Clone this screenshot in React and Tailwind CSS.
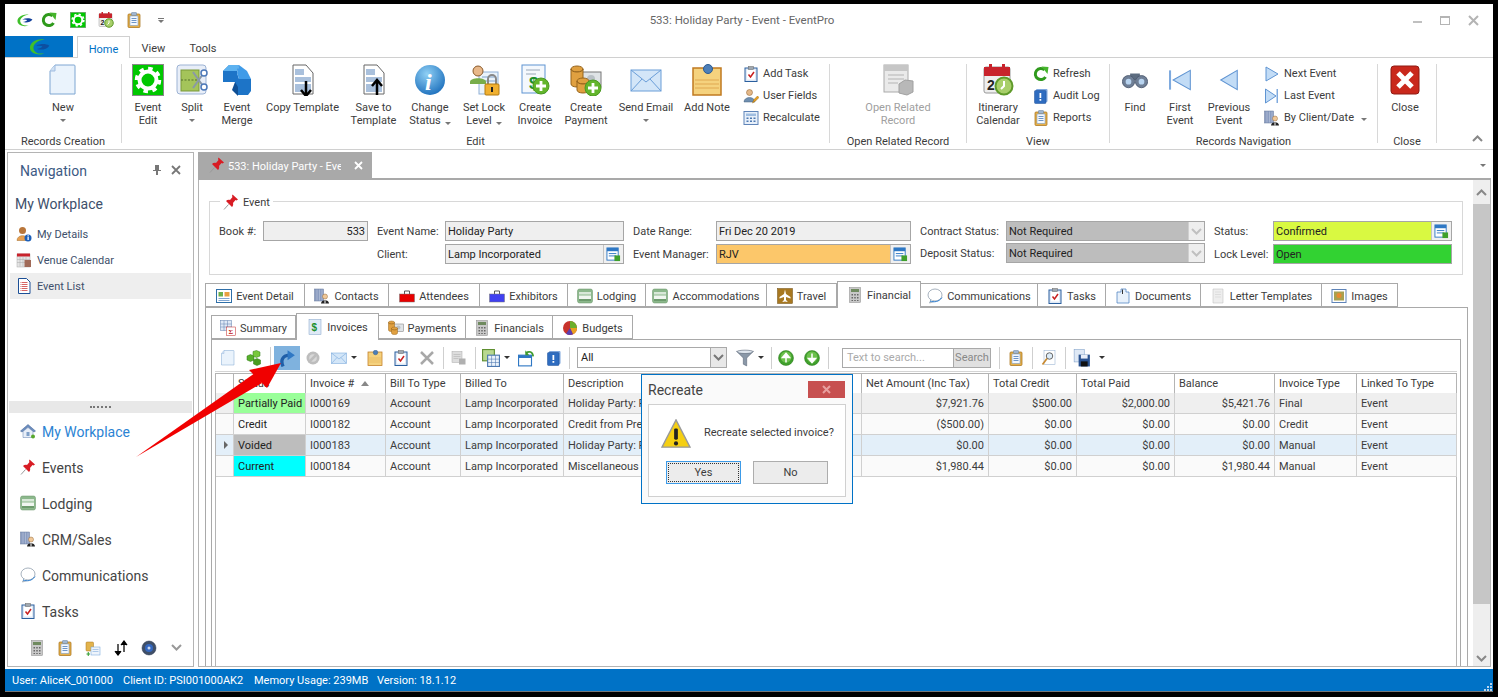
import React from "react";

const Ic = ({ s = 16, v = 16, children }) => (
  <svg width={s} height={s} viewBox={`0 0 ${v} ${v}`} className="shrink-0">
    {children}
  </svg>
);

// small icon set, all drawn on a 32 box
const Logo = ({ s = 18, dark }) => (
  <Ic s={s} v={32}>
    <path d="M24 5C11 3 1 11 3 19c2 7 13 10 21 6-8 2-15-1-16-7-1-6 6-12 16-13z" fill="#3fbf2a" />
    <path d="M12 14c6-3 14-3 19 0-3 5-11 7-18 5 4-1 7-2 8-4-3-1-6-1-9-1z" fill={dark ? "#0d4fa0" : "#123f9a"} />
  </Ic>
);
const Refresh = ({ s = 16 }) => (
  <Ic s={s} v={32}>
    <path d="M25 22a11 11 0 1 1-2-14" fill="none" stroke="#2f9a1c" strokeWidth="6" />
    <path d="M17 1l14 1-2 14z" fill="#46b52c" />
  </Ic>
);
const Gear = ({ s = 16 }) => (
  <Ic s={s} v={32}>
    <rect x="0.5" y="0.5" width="31" height="31" fill="#00c800" stroke="#888" />
    <circle cx="16" cy="16" r="11.5" fill="none" stroke="#fff" strokeWidth="3.5" strokeDasharray="4.5 4.5" />
    <circle cx="16" cy="16" r="8.5" fill="none" stroke="#fff" strokeWidth="4" />
  </Ic>
);
const CalClock = ({ s = 16 }) => (
  <Ic s={s} v={32}>
    <rect x="2" y="3" width="26" height="26" rx="2" fill="#eee" stroke="#999" />
    <rect x="2" y="3" width="26" height="9" fill="#c8232c" />
    <rect x="7" y="0" width="3" height="6" fill="#c8232c" />
    <rect x="20" y="0" width="3" height="6" fill="#c8232c" />
    <text x="5" y="26" fontSize="14" fontWeight="700" fill="#222" fontFamily="Liberation Sans">2</text>
    <circle cx="22" cy="22" r="8.5" fill="#a8cf6a" stroke="#5f9a2a" strokeWidth="2" />
    <path d="M22 17v5l-3 3" stroke="#fff" strokeWidth="2" fill="none" />
  </Ic>
);
const Clip = ({ s = 16 }) => (
  <Ic s={s} v={32}>
    <rect x="4" y="4" width="24" height="27" rx="2" fill="#e6b04a" stroke="#a9741c" strokeWidth="1.5" />
    <rect x="8" y="8" width="16" height="19" fill="#f4f8fd" stroke="#6b8fc0" />
    <rect x="11" y="1" width="10" height="6" rx="1" fill="#9fb5cf" stroke="#66809e" />
    <path d="M11 13h10M11 17h10M11 21h10" stroke="#3f74b5" strokeWidth="1.5" />
  </Ic>
);
const NewDoc = ({ s = 32 }) => (
  <Ic s={s} v={32}>
    <path d="M8 1h19a1 1 0 0 1 1 1v28H3V7z" fill="#eaf3fc" stroke="#7fa6d2" />
    <path d="M8 1v6H3" fill="#cfe0f3" stroke="#9fbce0" />
  </Ic>
);
const Split = () => (
  <Ic s={32} v={32}>
    <rect x="1" y="1" width="29" height="29" rx="3" fill="#e8eef8" stroke="#9db3d4" />
    <rect x="5" y="6" width="18" height="21" fill="#a4c45a" stroke="#7a9a38" />
    <path d="M5 16h18" stroke="#55702a" strokeDasharray="2 1.5" />
    <path d="M17 8l10 14M17 24l10-14" stroke="#8a98a8" strokeWidth="2" />
    <circle cx="28" cy="9" r="3" fill="#fff" stroke="#4c78b8" strokeWidth="1.5" />
    <circle cx="28" cy="23" r="3" fill="#fff" stroke="#4c78b8" strokeWidth="1.5" />
  </Ic>
);
const Merge = () => (
  <Ic s={32} v={32}>
    <path d="M2 7l6-6h10l-2 8 2 6h12v12l-3 4H17l-3-4v-9H2z" fill="#1d74c7" />
    <path d="M18 1l-2 8 2 6h12l-4-8-8-6z" fill="#3f9be8" />
    <path d="M2 7l6-6h10l-2 6H2z" fill="#5db2f0" />
    <path d="M14 18l-3 8 6 6v-9z" fill="#0e4f95" />
  </Ic>
);
const Template = ({ up }) => (
  <Ic s={32} v={32}>
    <path d="M6 1h13l7 8v21H6z" fill="#fff" stroke="#666" />
    <path d="M8 5h9v6H8zM8 13h16v5H8zM8 20h16v8H8z" fill="#a9c0dc" />
    <path d={up ? "M19 31V17M14 22l5-6 5 6" : "M19 17v14M14 26l5 6 5-6"} stroke="#000" strokeWidth="2.5" fill="none" />
  </Ic>
);
const Info = () => (
  <Ic s={32} v={32}>
    <defs>
      <radialGradient id="ig" cx="0.4" cy="0.3" r="0.8">
        <stop offset="0" stopColor="#8fd0f5" />
        <stop offset="1" stopColor="#1468b8" />
      </radialGradient>
    </defs>
    <circle cx="16" cy="16" r="15" fill="url(#ig)" />
    <text x="11" y="26" fontSize="24" fontWeight="700" fontStyle="italic" fill="#fff" fontFamily="Liberation Serif">i</text>
  </Ic>
);
const LockUser = () => (
  <Ic s={32} v={32}>
    <rect x="11" y="8" width="19" height="22" fill="#eaf3fb" stroke="#8fb0d6" />
    <path d="M14 13h13M14 17h13" stroke="#7fa3cc" />
    <circle cx="10" cy="7" r="5" fill="#e8b88a" stroke="#8a5a2a" />
    <path d="M2 18c0-5 16-5 16 0v2H2z" fill="#78ad4a" />
    <path d="M20 20v-5a4 4 0 0 1 8 0v5" fill="none" stroke="#888" strokeWidth="2" />
    <rect x="17" y="20" width="14" height="11" rx="1" fill="#f0b030" stroke="#b37a10" />
    <rect x="23" y="23" width="2" height="5" fill="#222" />
  </Ic>
);
const PlusDot = ({ x = 22, y = 22 }) => (
  <g>
    <circle cx={x} cy={y} r="8" fill="#63b52c" stroke="#4a9a20" />
    <path d={`M${x - 5} ${y}h10M${x} ${y - 5}v10`} stroke="#fff" strokeWidth="2.8" />
  </g>
);
const InvoicePlus = () => (
  <Ic s={32} v={32}>
    <rect x="3" y="1" width="23" height="28" fill="#f4f8fd" stroke="#5f94d2" />
    <path d="M7 6h14M7 10h10" stroke="#9aa8b8" />
    <text x="10" y="25" fontSize="17" fontWeight="700" fill="#1c8f2c" fontFamily="Liberation Sans">$</text>
    <PlusDot />
  </Ic>
);
const Coins = ({ s = 32, plus }) => (
  <Ic s={s} v={32}>
    <rect x="11" y="8" width="20" height="15" fill="#dfe3e6" stroke="#777" />
    <circle cx="21" cy="15" r="4" fill="#b9c0c6" />
    <g fill="#e0a040" stroke="#96641c">
      <ellipse cx="7" cy="5" rx="6" ry="3" />
      <path d="M1 5v15c0 4 12 4 12 0V5c0 4-12 4-12 0z" />
      <ellipse cx="13" cy="17" rx="6" ry="3" />
      <path d="M7 17v9c0 4 12 4 12 0v-9c0 4-12 4-12 0z" />
    </g>
    {plus && <PlusDot x={23} y={24} />}
  </Ic>
);
const Mail = ({ s = 32 }) => (
  <Ic s={s} v={32}>
    <rect x="1" y="6" width="30" height="21" fill="#d3e6f8" stroke="#6a9ed8" />
    <path d="M1 6l15 12L31 6M1 27l11-12M31 27L20 15" fill="none" stroke="#6a9ed8" />
  </Ic>
);
const Note = ({ s = 32 }) => (
  <Ic s={s} v={32}>
    <rect x="2" y="4" width="28" height="27" fill="#f5d27e" stroke="#c07a20" strokeWidth="1.5" />
    <path d="M4 16h24M4 20h24M4 24h24" stroke="#e0a850" />
    <circle cx="17" cy="5" r="4.5" fill="#4d7fb8" stroke="#2b5a92" />
  </Ic>
);
const Task = ({ s = 16 }) => (
  <Ic s={s} v={32}>
    <rect x="4" y="4" width="24" height="27" fill="#dfe9f6" stroke="#2a5f9e" strokeWidth="2" />
    <rect x="8" y="8" width="16" height="19" fill="#fff" />
    <rect x="11" y="1" width="10" height="6" fill="#a0a8b0" stroke="#666" />
    <path d="M11 17l4 5 7-10" fill="none" stroke="#c82020" strokeWidth="3" />
  </Ic>
);
const UserFields = () => (
  <Ic s={16} v={32}>
    <circle cx="13" cy="9" r="6" fill="#e4b888" stroke="#8a5a2a" />
    <path d="M2 28c0-12 22-12 22 0z" fill="#6f8fb0" stroke="#44617f" />
    <path d="M19 30l3-7 7-7 3 3-7 7z" fill="#e8a020" stroke="#a06a10" />
  </Ic>
);
const CalcBlue = ({ s = 16 }) => (
  <Ic s={s} v={32}>
    <rect x="2" y="3" width="28" height="26" fill="#e8f0fa" stroke="#5f84b8" strokeWidth="2" />
    <rect x="6" y="7" width="20" height="5" fill="#9fbde0" />
    <path d="M7 15h4v3H7zM14 15h4v3h-4zM21 15h4v3h-4zM7 21h4v3H7zM14 21h4v3h-4zM21 21h4v3h-4z" fill="#4d78b0" />
  </Ic>
);
const Related = () => (
  <Ic s={32} v={32}>
    <rect x="2" y="1" width="24" height="27" fill="#eaeaea" stroke="#aaa" />
    <rect x="2" y="1" width="24" height="6" fill="#c6c6c6" />
    <path d="M6 11h16M6 15h16M6 19h10" stroke="#b4b4b4" />
    <path d="M17 20l6-4 8 1v11l-6 3-8-2z" fill="#b8b8b8" stroke="#a0a0a0" />
  </Ic>
);
const Audit = ({ s = 16 }) => (
  <Ic s={s} v={32}>
    <rect x="6" y="2" width="23" height="26" rx="2" fill="#7fa8de" />
    <rect x="3" y="5" width="23" height="26" rx="2" fill="#2e6cc0" stroke="#1c4f96" />
    <rect x="13" y="10" width="3.5" height="10" fill="#fff" />
    <rect x="13" y="22" width="3.5" height="3.5" fill="#fff" />
  </Ic>
);
const Binoc = () => (
  <Ic s={26} v={32}>
    <path d="M10 8h12v8H10z" fill="#5c6c80" />
    <circle cx="8" cy="18" r="7.5" fill="#6f7f96" stroke="#46546a" />
    <circle cx="24" cy="18" r="7.5" fill="#6f7f96" stroke="#46546a" />
    <circle cx="8" cy="18" r="3.5" fill="#b8d4f0" />
    <circle cx="24" cy="18" r="3.5" fill="#b8d4f0" />
  </Ic>
);
const Tri = ({ s = 22, dir, bar }) => (
  <Ic s={s} v={32}>
    {dir === "l" ? (
      <path d={bar ? "M6 16L31 2v28z" : "M4 16L28 2v28z"} fill="#c2dcf6" stroke="#5f94d2" strokeWidth="1.5" />
    ) : (
      <path d={bar ? "M3 2l21 14L3 30z" : "M4 2l24 14L4 30z"} fill="#c2dcf6" stroke="#5f94d2" strokeWidth="2" />
    )}
    {bar && <rect x={dir === "l" ? 0 : 25} y="2" width="3" height="28" fill="#7faade" />}
  </Ic>
);
const Building = ({ s = 16 }) => (
  <Ic s={s} v={32}>
    <rect x="1" y="2" width="18" height="24" fill="#8a9cc0" stroke="#66789c" />
    <path d="M6 3v22M11 3v22M16 3v22" stroke="#c8d2e4" />
    <circle cx="22" cy="17" r="5" fill="#f0c898" stroke="#946a3a" />
    <path d="M14 31c0-9 16-9 16 0z" fill="#222" />
    <path d="M22 25v6" stroke="#fff" strokeWidth="2" />
  </Ic>
);
const RedClose = () => (
  <Ic s={32} v={32}>
    <rect x="2" y="2" width="28" height="28" rx="3" fill="#c9281c" stroke="#8f1a12" />
    <path d="M9 9l14 14M23 9L9 23" stroke="#fff" strokeWidth="5" />
  </Ic>
);
const Pin = ({ s = 16 }) => (
  <Ic s={s} v={32}>
    <path d="M11 21L2 31" stroke="#999" strokeWidth="2" />
    <path d="M19 1l11 10-3 2-2-1-5 6c1 3 0 6-2 8L6 14c2-2 5-3 8-2l5-6-1-2z" fill="#d81c24" />
  </Ic>
);
const PersonInfo = () => (
  <Ic s={16} v={32}>
    <circle cx="13" cy="9" r="7" fill="#b9763a" />
    <path d="M2 29c0-13 22-13 22 0z" fill="#e8a050" stroke="#a06a28" />
    <circle cx="24" cy="24" r="7" fill="#1c5fb8" />
    <rect x="23" y="22" width="2.5" height="6" fill="#fff" />
    <rect x="23" y="18.5" width="2.5" height="2.5" fill="#fff" />
  </Ic>
);
const VenueCal = () => (
  <Ic s={16} v={32}>
    <rect x="2" y="4" width="26" height="26" fill="#e4e4e4" stroke="#aaa" />
    <rect x="2" y="3" width="26" height="6" fill="#c8232c" />
    <path d="M8 9v20M14 9v20M20 9v20M2 15h26M2 21h26" stroke="#aaa" />
    <rect x="17" y="16" width="13" height="14" fill="#a06a58" />
  </Ic>
);
const ListDoc = () => (
  <Ic s={16} v={32}>
    <path d="M5 1h16l7 7v23H5z" fill="#fff" stroke="#1c4f96" strokeWidth="2" />
    <path d="M9 9h14M9 13h14M9 17h14M9 21h14M9 25h14" stroke="#c83030" strokeWidth="1.5" strokeDasharray="2 1 11 0" />
  </Ic>
);
const House = () => (
  <Ic s={16} v={32}>
    <path d="M1 16L16 3l15 13-3 2-12-10L4 18z" fill="#6d8fc0" stroke="#3f5f92" />
    <path d="M6 17l10-8 10 8v12H6z" fill="#e8eef8" stroke="#5f7fae" />
    <rect x="13" y="18" width="6" height="8" fill="#7f9fc8" />
    <circle cx="26" cy="27" r="4" fill="#58a82c" />
  </Ic>
);
const Bed = ({ s = 16 }) => (
  <Ic s={s} v={32}>
    <rect x="1" y="2" width="30" height="28" rx="4" fill="#8cb88c" stroke="#649264" />
    <rect x="4" y="8" width="24" height="5" fill="#d8e8d8" />
    <rect x="4" y="15" width="24" height="7" fill="#f0f6f0" />
    <rect x="4" y="23" width="24" height="2" fill="#4f7f4f" />
  </Ic>
);
const Bubble = ({ s = 16 }) => (
  <Ic s={s} v={32}>
    <ellipse cx="16" cy="14" rx="14" ry="12" fill="#fff" stroke="#8a98a8" strokeWidth="1.5" />
    <path d="M8 24l-3 6 9-3" fill="#fff" stroke="#8a98a8" strokeWidth="1.5" />
    <path d="M6 26c8 3 18 2 24-7" fill="none" stroke="#2f7fd0" strokeWidth="2" />
  </Ic>
);
const CalcGrey = ({ s = 16 }) => (
  <Ic s={s} v={32}>
    <rect x="5" y="1" width="22" height="30" fill="#c8c8c8" stroke="#888" />
    <rect x="8" y="4" width="16" height="6" fill="#6f8a5f" />
    <path d="M9 14h3v3H9zM14.5 14h3v3h-3zM20 14h3v3h-3zM9 20h3v3H9zM14.5 20h3v3h-3zM20 20h3v3h-3zM9 26h3v2H9zM14.5 26h3v2h-3zM20 26h3v2h-3z" fill="#666" />
  </Ic>
);
const FileList = () => (
  <Ic s={16} v={32}>
    <rect x="2" y="4" width="15" height="18" rx="2" fill="#e2b34c" stroke="#a9741c" />
    <rect x="12" y="14" width="18" height="16" fill="#eef4fb" stroke="#6a9ed8" />
    <path d="M15 19h12M15 23h12" stroke="#6a9ed8" />
    <path d="M3 28h7M6.5 24v8" stroke="#2c9a2c" strokeWidth="2" />
  </Ic>
);
const Arrows = () => (
  <Ic s={16} v={32}>
    <path d="M10 8v20M4 22l6 8 6-8" fill="#000" stroke="#000" strokeWidth="2.5" />
    <path d="M22 24V4M16 10l6-8 6 8" fill="#000" stroke="#000" strokeWidth="2.5" />
  </Ic>
);
const Lens = () => (
  <Ic s={16} v={32}>
    <circle cx="16" cy="16" r="14" fill="#3f4f68" stroke="#26334a" />
    <circle cx="16" cy="16" r="8" fill="#3568c0" />
    <circle cx="16" cy="16" r="3" fill="#c8d8f0" />
  </Ic>
);
const GridDetail = () => (
  <Ic s={16} v={32}>
    <rect x="1" y="3" width="30" height="26" fill="#fff" stroke="#2f6fa8" strokeWidth="2" />
    <rect x="5" y="8" width="9" height="9" fill="#6cb04c" />
    <rect x="17" y="8" width="10" height="9" fill="#e8a040" />
    <path d="M5 21h22M5 25h22" stroke="#7fa6d2" strokeWidth="2" />
  </Ic>
);
const Bag = ({ c }) => (
  <Ic s={16} v={32}>
    <path d="M11 12V6h10v6" fill="none" stroke="#555" strokeWidth="2" />
    <rect x="1" y="12" width="30" height="16" fill={c} stroke="#777" />
  </Ic>
);
const Plane = () => (
  <Ic s={16} v={32}>
    <rect x="1" y="1" width="30" height="30" fill="#a87820" stroke="#6f4c10" />
    <path d="M16 3l2 9 9 6v3l-9-3v6l3 3v1l-5-1-5 1v-1l3-3v-6l-9 3v-3l9-6z" fill="#fff" />
  </Ic>
);
const DocTab = () => (
  <Ic s={16} v={32}>
    <path d="M4 8h8V2h10v6h6v22H4z" fill="#e8f1fb" stroke="#4c80c0" strokeWidth="1.5" />
    <path d="M15 3v9" stroke="#333" strokeWidth="2" />
  </Ic>
);
const Letter = () => (
  <Ic s={16} v={32}>
    <path d="M6 2h20v28H6z" fill="#eee" stroke="#bbb" />
    <path d="M10 8h12M10 13h12M10 18h12" stroke="#ccc" />
  </Ic>
);
const ImageI = () => (
  <Ic s={16} v={32}>
    <rect x="2" y="3" width="28" height="26" fill="#fff" stroke="#5f84b8" strokeWidth="2" />
    <rect x="6" y="7" width="20" height="18" fill="#a8a050" />
    <circle cx="16" cy="15" r="5" fill="#e88a30" />
  </Ic>
);
const SummaryI = () => (
  <Ic s={16} v={32}>
    <rect x="1" y="1" width="22" height="20" fill="#dfe9f6" stroke="#5f7fae" />
    <path d="M1 8h22M1 14h22M8 1v20M15 1v20" stroke="#5f7fae" />
    <rect x="13" y="14" width="18" height="17" fill="#fff" stroke="#c02020" />
    <text x="17" y="28" fontSize="14" fontWeight="700" fill="#c02020" fontFamily="Liberation Serif">Σ</text>
  </Ic>
);
const DollarDoc = () => (
  <Ic s={16} v={32}>
    <rect x="4" y="1" width="24" height="30" fill="#dfeaf6" stroke="#7f9fc8" />
    <text x="9" y="24" fontSize="20" fontWeight="700" fill="#1c8f2c" fontFamily="Liberation Sans">$</text>
  </Ic>
);
const Pie = () => (
  <Ic s={16} v={32}>
    <circle cx="16" cy="16" r="14" fill="#c8332c" />
    <path d="M16 16V2a14 14 0 0 1 14 14z" fill="#6cb02c" />
    <path d="M16 16h14a14 14 0 0 1-8 12.6z" fill="#e8a020" />
    <path d="M16 16l6 12.6A14 14 0 0 1 8 27.5z" fill="#5a3fb0" />
  </Ic>
);
const Cubes = () => (
  <Ic s={16} v={32}>
    <path d="M2 12l7-3 7 3v8l-7 3-7-3z" fill="#58b02c" stroke="#2f7a14" />
    <path d="M14 3l7-2 7 3v8l-7 3-7-3z" fill="#78c83c" stroke="#2f7a14" />
    <path d="M15 20l7-3 7 3v8l-7 3-7-3z" fill="#4a9c20" stroke="#2f7a14" />
  </Ic>
);
const CurveArrow = () => (
  <Ic s={18} v={32}>
    <path d="M9 31C4 20 8 12 20 11" fill="none" stroke="#1f5fa8" strokeWidth="6" />
    <path d="M17 2l13 9-13 9z" fill="#2f78c4" />
  </Ic>
);
const Ban = () => (
  <Ic s={16} v={32}>
    <circle cx="16" cy="16" r="13" fill="#bdbdbd" />
    <circle cx="16" cy="16" r="7.5" fill="#d8d8d8" />
    <path d="M10 22l12-12" stroke="#bdbdbd" strokeWidth="5" />
  </Ic>
);
const XGrey = () => (
  <Ic s={16} v={32}>
    <path d="M4 4l24 24M28 4L4 28" stroke="#a8a8a8" strokeWidth="5" />
  </Ic>
);
const CopyGrey = () => (
  <Ic s={16} v={32}>
    <rect x="2" y="3" width="20" height="22" fill="#ddd" stroke="#aaa" />
    <path d="M5 9h14M5 13h14M5 17h10" stroke="#aaa" />
    <rect x="16" y="17" width="13" height="12" fill="#b0b0b0" />
  </Ic>
);
const GridMulti = () => (
  <Ic s={18} v={32}>
    <rect x="1" y="1" width="21" height="20" fill="#b8d890" stroke="#5f8f30" strokeWidth="2" />
    <rect x="10" y="11" width="21" height="20" fill="#eaf2fb" stroke="#4c78b0" strokeWidth="2" />
    <path d="M10 18h21M10 24h21M17 11v20M24 11v20" stroke="#4c78b0" />
  </Ic>
);
const WinArrow = () => (
  <Ic s={18} v={32}>
    <rect x="1" y="11" width="23" height="19" fill="#fff" stroke="#2f78c4" strokeWidth="2" />
    <rect x="1" y="11" width="23" height="5" fill="#2f78c4" />
    <path d="M14 7c6-4 12-2 13 6" fill="none" stroke="#3f9a2c" strokeWidth="3" />
    <path d="M13 2v9h7z" fill="#3f9a2c" />
  </Ic>
);
const Funnel = () => (
  <Ic s={18} v={32}>
    <path d="M1 4h30L19 16v14l-6-3V16z" fill="#8a98a8" stroke="#566272" />
    <ellipse cx="16" cy="5" rx="14" ry="3" fill="#dfe6ee" stroke="#566272" />
  </Ic>
);
const RoundArrow = ({ up }) => (
  <Ic s={16} v={32}>
    <circle cx="16" cy="16" r="15" fill="#3f9f2c" stroke="#2a7a1a" />
    <circle cx="16" cy="14" r="11" fill="#6cc04c" />
    <path d={up ? "M16 25V12M9 15l7-8 7 8z" : "M16 7v13M9 17l7 8 7-8z"} fill="#fff" stroke="#fff" strokeWidth="3" />
  </Ic>
);
const FindDoc = () => (
  <Ic s={16} v={32}>
    <rect x="6" y="1" width="22" height="28" fill="#fff" stroke="#8aa8cc" />
    <circle cx="17" cy="12" r="6.5" fill="#dcecf9" stroke="#666" strokeWidth="2" />
    <path d="M12 17L3 29" stroke="#c88a30" strokeWidth="3.5" />
  </Ic>
);
const SaveI = () => (
  <Ic s={18} v={32}>
    <rect x="2" y="1" width="18" height="22" fill="#dfe9f6" stroke="#7f9fc8" />
    <rect x="10" y="10" width="20" height="21" fill="#2a5290" />
    <rect x="14" y="10" width="12" height="7" fill="#e8eef8" />
    <rect x="14" y="22" width="12" height="9" fill="#111" />
  </Ic>
);
const Warn = () => (
  <Ic s={30} v={32}>
    <path d="M16 1L31 30H1z" fill="#f5cf12" stroke="#999" strokeWidth="1.5" />
    <rect x="14" y="10" width="4" height="12" rx="1.5" fill="#222" />
    <circle cx="16" cy="26" r="2.2" fill="#222" />
  </Ic>
);
const Caret = ({ c = "#777" }) => (
  <span className="inline-block h-0 w-0 border-x-[3px] border-t-[3px] border-x-transparent" style={{ borderTopColor: c }} />
);
const Chevron = ({ up, c = "#999" }) => (
  <svg width="11" height="7" viewBox="0 0 11 7">
    <path d={up ? "M1 6l4.5-4.5L10 6" : "M1 1l4.5 4.5L10 1"} fill="none" stroke={c} strokeWidth="2" />
  </svg>
);

const BigBtn = ({ w, icon, lines, arrow, off }) => (
  <div className={`flex flex-col items-center pt-[6px] leading-[13px] ${off ? "text-[#a0a0a0]" : ""}`} style={{ width: w }}>
    <div className="mb-[5px] flex h-[32px] items-center">{icon}</div>
    {lines.map((t, i) => (
      <div key={i} className="whitespace-nowrap">
        {t}
        {arrow === "inline" && i === lines.length - 1 && (
          <span className="ml-[4px] inline-block align-middle"><Caret /></span>
        )}
      </div>
    ))}
    {arrow === "below" && <div className="flex h-[13px] items-center"><Caret /></div>}
  </div>
);
const SmallCol = ({ items, className }) => (
  <div className={`flex flex-col pt-[5px] ${className}`}>
    {items.map(([icon, t, arrow]) => (
      <div key={t} className="flex h-[22px] items-center gap-[4px] whitespace-nowrap">
        <span className="flex w-[16px] justify-center">{icon}</span>
        {t}
        {arrow && <span className="ml-[3px]"><Caret /></span>}
      </div>
    ))}
  </div>
);
const Group = ({ w, label, children }) => (
  <div className="flex shrink-0 flex-col" style={{ width: w }}>
    <div className="flex h-[75px]">{children}</div>
    <div className="h-[16px] pt-[1px] text-center leading-[16px]">{label}</div>
  </div>
);
const Sep = () => <div className="my-[6px] w-px shrink-0 bg-[#d8d8d8]" />;

const Field = ({ label, lw, w, value, bg = "bg-[#efefef]", right, side, cls = "" }) => (
  <div className="flex h-[20px] items-center">
    <div className="shrink-0 whitespace-nowrap pt-[2px]" style={{ width: lw }}>{label}</div>
    <div className={`flex h-full items-center border border-[#a6a6a6] text-[#222] ${bg} ${cls}`} style={{ width: w }}>
      <div className={`min-w-0 flex-1 px-[2px] pt-[2px] ${right ? "text-right" : ""}`}>{value}</div>
      {side}
    </div>
  </div>
);
const Lookup = () => (
  <div className="flex h-full w-[20px] items-center justify-center border-l border-[#c4c4c4] bg-[#f0f0f0]">
    <Ic s={15} v={32}>
      <rect x="2" y="2" width="24" height="26" fill="#fff" stroke="#2f78c4" strokeWidth="2" />
      <rect x="2" y="2" width="24" height="7" fill="#2f78c4" />
      <path d="M6 14h16M6 19h16" stroke="#2f78c4" strokeWidth="2" />
      <rect x="18" y="18" width="12" height="12" fill="#3fa02c" />
    </Ic>
  </div>
);
const SelectArrow = () => (
  <div className="flex h-full w-[16px] items-center justify-center border-l border-[#d0d0d0] bg-[#eee]">
    <Chevron c="#c0c0c0" />
  </div>
);

const tabs = [
  [99, <GridDetail />, "Event Detail"],
  [84, <Building />, "Contacts"],
  [91, <Bag c="#e80000" />, "Attendees"],
  [88, <Bag c="#4040f0" />, "Exhibitors"],
  [78, <Bed />, "Lodging"],
  [121, <Bed />, "Accommodations"],
  [70, <Plane />, "Travel"],
  [84, <CalcGrey />, "Financial", true],
  [117, <Bubble />, "Communications"],
  [68, <Task />, "Tasks"],
  [95, <DocTab />, "Documents"],
  [121, <Letter />, "Letter Templates"],
  [76, <ImageI />, "Images"],
];
const subTabs = [
  [84, <SummaryI />, "Summary"],
  [83, <DollarDoc />, "Invoices", true],
  [87, <Coins s={16} />, "Payments"],
  [87, <CalcGrey />, "Financials"],
  [80, <Pie />, "Budgets"],
];
const Tab = ({ w, icon, label, on, h }) => (
  <div
    className={`flex shrink-0 items-center justify-center gap-[4px] whitespace-nowrap border border-[#a9a9a9] ${on ? "z-10 -mb-px -mt-[2px] border-b-0 bg-white" : "border-l-0 bg-white pt-[2px]"} ${h}`}
    style={{ width: w }}
  >
    {icon}
    <span className="pt-[2px]">{label}</span>
  </div>
);

const cols = "grid grid-cols-[18px_72px_80px_75px_103px_298px_127px_88px_98px_100px_82px_100px]";
const heads = ["", "Status", "Invoice #", "Bill To Type", "Billed To", "Description", "Net Amount (Inc Tax)", "Total Credit", "Total Paid", "Balance", "Invoice Type", "Linked To Type"];
const rows = [
  ["Partially Paid", "bg-[#99ff99]", "I000169", "Holiday Party: Final", "$7,921.76", "$500.00", "$2,000.00", "$5,421.76", "Final", "bg-[#efefef]", "h-[21px]"],
  ["Credit", "", "I000182", "Credit from Previous", "($500.00)", "$0.00", "$0.00", "$0.00", "Credit", "bg-[#fafafa]", "h-[21px]"],
  ["Voided", "bg-[#bdbdbd]", "I000183", "Holiday Party: Final", "$0.00", "$0.00", "$0.00", "$0.00", "Manual", "bg-[#e3eff9]", "h-[21px]"],
  ["Current", "bg-[#00ffff]", "I000184", "Miscellaneous Invoice", "$1,980.44", "$0.00", "$0.00", "$1,980.44", "Manual", "bg-[#fafafa]", "h-[21px]"],
];
const Cell = ({ children, cls = "" }) => (
  <div className={`overflow-hidden whitespace-nowrap border-b border-r border-[#d0d0d0] px-[4px] leading-[22px] ${cls}`}>{children}</div>
);
const TB = ({ children, w = "w-[26px]", cls = "" }) => (
  <div className={`flex h-[24px] shrink-0 items-center justify-center gap-[4px] ${w} ${cls}`}>{children}</div>
);
const TSep = ({ cls = "mx-[3px]" }) => <div className={`h-[22px] w-px shrink-0 bg-[#cfcfcf] ${cls}`} />;

export default function App() {
  return (
    <div className="relative flex h-[697px] w-[1498px] flex-col overflow-hidden bg-black px-[5px] pb-[5px] pt-[4px] font-['Roboto',sans-serif] text-[11px] text-[#3c3c3c]">
      {/* title bar */}
      <div className="flex h-[32px] shrink-0 items-center bg-white">
        <div className="flex flex-1 items-center">
          <div className="flex w-[28px] justify-end"><Logo s={17} /></div>
          <div className="ml-[8px]"><Refresh /></div>
          <div className="ml-[13px]"><Gear /></div>
          <div className="ml-[12px]"><CalClock /></div>
          <div className="ml-[12px]"><Clip /></div>
          <div className="ml-[16px] flex flex-col items-center gap-[1px]">
            <div className="h-px w-[6px] bg-[#777]" />
            <Caret />
          </div>
        </div>
        <div className="pt-[2px] text-[11.5px] text-[#666]">533: Holiday Party - Event - EventPro</div>
        <div className="flex flex-1 items-center justify-end gap-[18px] pr-[14px]">
          <div className="mt-[3px] h-[2px] w-[9px] bg-[#c0c0c0]" />
          <div className="h-[9px] w-[10px] border border-t-2 border-[#b4b4b4]" />
          <svg width="11" height="11" viewBox="0 0 11 11"><path d="M1 1l9 9M10 1l-9 9" stroke="#b4b4b4" strokeWidth="2" /></svg>
        </div>
      </div>
      {/* ribbon tabs */}
      <div className="flex h-[22px] shrink-0 border-b border-[#d0d0d0] bg-white">
        <div className="flex w-[68px] items-center justify-center bg-[#0072c6]"><Logo s={22} dark /></div>
        <div className="z-10 ml-[4px] flex h-[22px] w-[53px] items-center justify-center border border-b-0 border-[#d0d0d0] bg-white pt-[6px] text-[#0072c6]">Home</div>
        <div className="flex w-[47px] items-center justify-center pt-[6px]">View</div>
        <div className="flex w-[52px] items-center justify-center pt-[6px]">Tools</div>
      </div>
      {/* ribbon */}
      <div className="flex h-[92px] shrink-0 border-b border-[#d0d0d0] bg-white">
        <Group w={116} label="Records Creation">
          <div className="w-full"><BigBtn w="100%" icon={<NewDoc />} lines={["New"]} arrow="below" /></div>
        </Group>
        <Sep />
        <Group w={707} label="Edit">
          <div className="w-[4px]" />
          <BigBtn w={44} icon={<Gear s={32} />} lines={["Event", "Edit"]} />
          <BigBtn w={44} icon={<Split />} lines={["Split"]} arrow="below" />
          <BigBtn w={46} icon={<Merge />} lines={["Event", "Merge"]} />
          <BigBtn w={85} icon={<Template />} lines={["Copy Template"]} />
          <BigBtn w={57} icon={<Template up />} lines={["Save to", "Template"]} />
          <BigBtn w={56} icon={<Info />} lines={["Change", "Status"]} arrow="inline" />
          <BigBtn w={52} icon={<LockUser />} lines={["Set Lock", "Level"]} arrow="inline" />
          <BigBtn w={50} icon={<InvoicePlus />} lines={["Create", "Invoice"]} />
          <BigBtn w={52} icon={<Coins plus />} lines={["Create", "Payment"]} />
          <BigBtn w={68} icon={<Mail />} lines={["Send Email"]} arrow="below" />
          <BigBtn w={54} icon={<Note />} lines={["Add Note"]} />
          <SmallCol
            className="ml-[9px]"
            items={[
              [<Task />, "Add Task"],
              [<UserFields />, "User Fields"],
              [<CalcBlue />, "Recalculate"],
            ]}
          />
        </Group>
        <Sep />
        <Group w={136} label="Open Related Record">
          <BigBtn w="100%" icon={<Related />} lines={["Open Related", "Record"]} off />
        </Group>
        <Sep />
        <Group w={142} label="View">
          <div className="w-[9px]" />
          <BigBtn w={44} icon={<CalClock s={32} />} lines={["Itinerary", "Calendar"]} />
          <SmallCol
            className="ml-[13px]"
            items={[
              [<Refresh />, "Refresh"],
              [<Audit />, "Audit Log"],
              [<Clip />, "Reports"],
            ]}
          />
        </Group>
        <Sep />
        <Group w={267} label="Records Navigation">
          <div className="w-[8px]" />
          <BigBtn w={34} icon={<Binoc />} lines={["Find"]} />
          <div className="w-[5px]" />
          <BigBtn w={46} icon={<Tri dir="l" bar />} lines={["First", "Event"]} />
          <BigBtn w={52} icon={<Tri dir="l" />} lines={["Previous", "Event"]} />
          <SmallCol
            className="ml-[9px]"
            items={[
              [<Tri s={16} dir="r" />, "Next Event"],
              [<Tri s={16} dir="r" bar />, "Last Event"],
              [<Building />, "By Client/Date", true],
            ]}
          />
        </Group>
        <Sep />
        <Group w={58} label="Close">
          <div className="w-full pr-[4px]"><BigBtn w="100%" icon={<RedClose />} lines={["Close"]} /></div>
        </Group>
        <Sep />
        <div className="flex flex-1 items-end justify-end pb-[7px] pr-[10px]"><Chevron up c="#888" /></div>
      </div>

      {/* main */}
      <div className="flex min-h-0 flex-1 bg-white pl-[2px] pr-[2px]">
        {/* navigation panel */}
        <div className="mb-[2px] mt-[2px] flex w-[187px] shrink-0 flex-col border border-[#b4b4b4] bg-white text-[#3d4f6b]">
          <div className="flex h-[34px] shrink-0 items-center pl-[12px] pr-[12px] text-[14px] text-[#3c5a84]">
            <span className="flex-1 pt-[2px]">Navigation</span>
            <svg width="8" height="10" viewBox="0 0 8 10" className="mr-[10px]"><path d="M2 0h4v5h2v1H5v4H3V6H0V5h2z" fill="#777" /></svg>
            <svg width="10" height="10" viewBox="0 0 10 10"><path d="M1 1l8 8M9 1L1 9" stroke="#777" strokeWidth="1.8" /></svg>
          </div>
          <div className="h-[33px] shrink-0 pl-[7px] text-[14px] leading-[34px]">My Workplace</div>
          <div className="mx-[2px] mt-[1px]">
            {[[<PersonInfo />, "My Details"], [<VenueCal />, "Venue Calendar"], [<ListDoc />, "Event List"]].map(([ic, t], i) => (
              <div key={t} className={`flex h-[26px] items-center gap-[5px] pl-[6px] ${i === 2 ? "bg-[#eeeeee]" : ""}`}>
                {ic}
                <span className="pt-[2px]">{t}</span>
              </div>
            ))}
          </div>
          <div className="flex-1" />
          <div className="mx-px flex h-[12px] shrink-0 items-center justify-center bg-[#e8e8e8]">
            <div className="w-[21px] border-t-2 border-dotted border-[#777]" />
          </div>
          <div className="flex flex-col pl-[12px] text-[14px] text-[#444]">
            {[
              [<House />, "My Workplace", true],
              [<Pin />, "Events"],
              [<Bed />, "Lodging"],
              [<Building />, "CRM/Sales"],
              [<Bubble />, "Communications"],
              [<Task />, "Tasks"],
            ].map(([ic, t, on]) => (
              <div key={t} className={`flex h-[36px] items-center gap-[6px] ${on ? "text-[#2b83d3]" : ""}`}>
                {ic}
                <span className="pt-[2px]">{t}</span>
              </div>
            ))}
          </div>
          <div className="flex h-[37px] shrink-0 items-center gap-[12px] pl-[21px]">
            <CalcGrey />
            <Clip />
            <FileList />
            <Arrows />
            <Lens />
            <span className="ml-[2px]"><Chevron /></span>
          </div>
        </div>

        {/* document area */}
        <div className="ml-[4px] flex min-w-0 flex-1 flex-col pb-[2px] pt-[2px]">
          <div className="flex h-[28px] shrink-0 items-start border-b-2 border-[#a9a9a9]">
            <div className="flex h-[26px] w-[174px] items-center gap-[3px] bg-[#a9a9a9] pl-[11px] text-white">
              <Pin />
              <span className="w-[113px] overflow-hidden whitespace-nowrap pt-[4px]">533: Holiday Party - Event</span>
              <svg width="9" height="9" viewBox="0 0 9 9" className="ml-[10px]"><path d="M1 1l7 7M8 1L1 8" stroke="#fff" strokeWidth="1.8" /></svg>
            </div>
            <div className="flex h-[26px] flex-1 items-center justify-end pr-[5px]"><Caret c="#777" /></div>
          </div>
          <div className="flex min-h-0 flex-1 border border-t-0 border-[#b4b4b4]">
            <div className="flex min-w-0 flex-1 flex-col pt-[21px]">
              {/* event group box */}
              <div className="relative ml-[10px] h-[74px] w-[1254px] shrink-0 border border-[#d8d8d8] pl-[9px] pt-[19px]">
                <div className="absolute -top-[9px] left-[10px] flex items-center gap-[4px] bg-white px-[3px]">
                  <Pin />
                  <span className="pt-[2px]">Event</span>
                </div>
                <div className="flex">
                  <div className="flex flex-col gap-[3px]">
                    <Field label="Book #:" lw={44} w={105} value="533" right />
                  </div>
                  <div className="ml-[9px] flex flex-col gap-[3px]">
                    <Field label="Event Name:" lw={68} w={179} value="Holiday Party" />
                    <Field label="Client:" lw={68} w={179} value="Lamp Incorporated" side={<Lookup />} />
                  </div>
                  <div className="ml-[9px] flex flex-col gap-[3px]">
                    <Field label="Date Range:" lw={83} w={195} value="Fri Dec 20 2019" />
                    <Field label="Event Manager:" lw={83} w={195} value="RJV" bg="bg-[#fcc76a]" side={<Lookup />} />
                  </div>
                  <div className="ml-[9px] flex flex-col gap-[2px]">
                    <Field label="Contract Status:" lw={86} w={199} value="Not Required" bg="bg-[#bdbdbd]" side={<SelectArrow />} />
                    <Field label="Deposit Status:" lw={86} w={199} value="Not Required" bg="bg-[#bdbdbd]" side={<SelectArrow />} />
                  </div>
                  <div className="ml-[9px] flex flex-col gap-[3px]">
                    <Field label="Status:" lw={59} w={179} value="Confirmed" bg="bg-[#d9f941]" side={<Lookup />} />
                    <Field label="Lock Level:" lw={59} w={179} value="Open" bg="bg-[#32d232]" />
                  </div>
                </div>
              </div>

              {/* main tabs */}
              <div className="ml-[6px] mt-[8px] flex h-[24px] shrink-0 border-l border-[#a9a9a9]">
                {tabs.map(([w, ic, t, on]) => (
                  <Tab key={t} w={w} icon={ic} label={t} on={on} h={on ? "h-[27px]" : "h-[24px]"} />
                ))}
              </div>
              <div className="ml-[6px] mr-[5px] flex min-h-0 flex-1 flex-col border border-b-0 border-[#a9a9a9] pl-[5px] pr-[6px] pt-[7px]">
                <div className="flex h-[24px] shrink-0 border-l border-[#a9a9a9]">
                  {subTabs.map(([w, ic, t, on]) => (
                    <Tab key={t} w={w} icon={ic} label={t} on={on} h={on ? "h-[27px]" : "h-[24px]"} />
                  ))}
                </div>
                <div className="flex min-h-0 flex-1 flex-col border border-b-0 border-[#a9a9a9] px-[3px]">
                  {/* toolbar */}
                  <div className="flex h-[32px] shrink-0 items-center border-b border-[#d4d4d4] pb-[1px] pt-[5px]">
                    <TB><NewDoc s={16} /></TB>
                    <TB><Cubes /></TB>
                    <TSep cls="mx-[3px]" />
                    <TB cls="bg-[#7fb2de]"><CurveArrow /></TB>
                    <TB><Ban /></TB>
                    <TB w="w-[36px]"><Mail s={16} /><Caret c="#333" /></TB>
                    <TB><Note s={16} /></TB>
                    <TB><Task /></TB>
                    <TB><XGrey /></TB>
                    <TSep cls="ml-[3px] mr-[2px]" />
                    <TB><CopyGrey /></TB>
                    <TSep cls="mx-[3px]" />
                    <TB w="w-[34px]"><GridMulti /><Caret c="#333" /></TB>
                    <TB w="w-[28px]"><WinArrow /></TB>
                    <TB><Audit /></TB>
                    <TSep cls="ml-[2px] mr-[7px]" />
                    <div className="flex h-[21px] w-[150px] shrink-0 items-center border border-[#a9a9a9] text-[#222]">
                      <span className="flex-1 pl-[3px] pt-[2px]">All</span>
                      <div className="flex h-full w-[16px] items-center justify-center border-l border-[#a9a9a9] bg-[#e8e8e8]"><Chevron c="#777" /></div>
                    </div>
                    <TB w="w-[36px]" cls="ml-[5px]"><Funnel /><Caret c="#333" /></TB>
                    <TSep cls="ml-[3px] mr-[1px]" />
                    <TB><RoundArrow up /></TB>
                    <TB><RoundArrow /></TB>
                    <TSep cls="mr-[13px] ml-[3px]" />
                    <div className="flex h-[20px] w-[149px] shrink-0 items-center border border-[#a9a9a9]">
                      <span className="flex-1 pl-[4px] pt-[2px] text-[#aaa]">Text to search...</span>
                      <div className="flex h-full w-[37px] items-center justify-center border-l border-[#a9a9a9] bg-[#e0e0e0] pt-[2px] text-[#888]">Search</div>
                    </div>
                    <TSep cls="ml-[8px] mr-[3px]" />
                    <TB><Clip /></TB>
                    <TSep cls="mx-[3px]" />
                    <TB><FindDoc /></TB>
                    <TSep cls="mx-[3px]" />
                    <TB><SaveI /></TB>
                    <span className="ml-[4px] flex"><Caret c="#333" /></span>
                  </div>
                  {/* grid */}
                  <div className="mt-[1px] flex min-h-0 flex-1 flex-col border border-b-0 border-[#b4b4b4]">
                    <div className={`${cols} h-[19px] shrink-0 bg-white`}>
                      {heads.map((h, i) => (
                        <div key={i} className="flex items-center whitespace-nowrap border-b border-r border-[#b4b4b4] px-[4px]">
                          <span className="pt-[2px]">{h}</span>
                          {h === "Invoice #" && <span className="ml-[7px] h-0 w-0 border-x-[4px] border-b-[5px] border-x-transparent border-b-[#888]" />}
                        </div>
                      ))}
                    </div>
                    {rows.map((r, i) => (
                      <div key={r[2]} className={`${cols} ${r[10]} shrink-0 ${r[9]}`}>
                        <Cell cls="flex items-center justify-end !px-[5px]">
                          {i === 2 && <span className="h-0 w-0 border-y-[4px] border-l-[4px] border-y-transparent border-l-[#666]" />}
                        </Cell>
                        <Cell cls={`${r[1]} text-[#222]`}>{r[0]}</Cell>
                        <Cell>{r[2]}</Cell>
                        <Cell>Account</Cell>
                        <Cell>Lamp Incorporated</Cell>
                        <Cell>{r[3]}</Cell>
                        <Cell cls="text-right">{r[4]}</Cell>
                        <Cell cls="text-right">{r[5]}</Cell>
                        <Cell cls="text-right">{r[6]}</Cell>
                        <Cell cls="text-right">{r[7]}</Cell>
                        <Cell>{r[8]}</Cell>
                        <Cell>Event</Cell>
                      </div>
                    ))}
                  </div>
                </div>
              </div>
            </div>
            {/* scrollbar */}
            <div className="flex w-[17px] shrink-0 flex-col bg-[#eeeeee]">
              <div className="flex h-[24px] items-center justify-center"><Chevron up c="#888" /></div>
              <div className="h-[400px] bg-[#c6c6c6]" />
              <div className="flex-1" />
              <div className="flex h-[16px] items-center justify-center"><Chevron c="#888" /></div>
            </div>
          </div>
        </div>
      </div>

      {/* status bar */}
      <div className="flex h-[23px] shrink-0 items-center border-b border-[#777] bg-[#0072c6] pl-[7px] pr-[1px] pt-[2px] text-white">
        <span className="w-[111px]">User: AliceK_001000</span>
        <span className="w-[131px]">Client ID: PSI001000AK2</span>
        <span className="w-[123px]">Memory Usage: 239MB</span>
        <span className="flex-1">Version: 18.1.12</span>
        <svg width="8" height="8" viewBox="0 0 8 8" className="self-end">
          <path d="M6 0h2v2H6zM3 3h2v2H3zM6 3h2v2H6zM0 6h2v2H0zM3 6h2v2H3zM6 6h2v2H6z" fill="#b8d4ee" />
        </svg>
      </div>

      {/* dialog */}
      <div className="absolute left-[641px] top-[374px] flex h-[130px] w-[212px] flex-col border border-[#0072c6] bg-[#fafafa] px-[6px]">
        <div className="flex h-[29px] shrink-0 items-center justify-between">
          <span className="pt-[2px] text-[14px] text-[#444]">Recreate</span>
          <div className="mr-px flex h-[17px] w-[37px] items-center justify-center bg-[#c75050]">
            <svg width="9" height="9" viewBox="0 0 9 9"><path d="M1 1l7 7M8 1L1 8" stroke="#e8a0a0" strokeWidth="2" /></svg>
          </div>
        </div>
        <div className="h-[93px] border border-[#d0d0d0] bg-white">
          <div className="flex h-[49px] items-center pl-[12px] pt-[8px]">
            <Warn />
            <span className="ml-[13px]">Recreate selected invoice?</span>
          </div>
          <div className="mt-[7px] flex gap-[12px] pl-[17px]">
            <div className="flex h-[23px] w-[75px] items-center justify-center border border-[#3d9be8] bg-[#ececec] p-px">
              <div className="flex h-full w-full items-center justify-center border border-dotted border-[#333] pt-[2px]">Yes</div>
            </div>
            <div className="flex h-[23px] w-[75px] items-center justify-center border border-[#adadad] bg-[#ececec] pt-[2px]">No</div>
          </div>
        </div>
      </div>

      {/* red pointer */}
      <svg className="pointer-events-none absolute left-0 top-0" width="1498" height="697" viewBox="0 0 1498 697">
        <path d="M136 457L255 373L262 383z" fill="#f00000" />
        <path d="M281 363L249 370L267 388z" fill="#f00000" />
      </svg>
    </div>
  );
}
